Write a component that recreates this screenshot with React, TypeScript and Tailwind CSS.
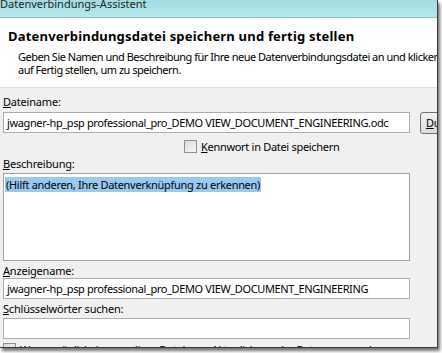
const font = "font-['Noto_Sans','Liberation_Sans',sans-serif]";

function Field({ value }: { value: string }) {
  return (
    <div className="h-[21px] w-[407px] shrink-0 border border-[#abadb3] bg-white pl-[3px] text-[11px] tracking-[-0.38px] leading-[19px] text-black whitespace-nowrap overflow-hidden">
      {value}
    </div>
  );
}

function Check({ label, underline }: { label: string; underline?: string }) {
  return (
    <div className="flex items-center gap-[4px] h-[13px]">
      <div className="h-[13px] w-[13px] shrink-0 border border-[#8f8f8f] bg-gradient-to-br from-[#dcdcdc] to-[#f6f6f6]" />
      <span className="text-[11px] tracking-[-0.3px] leading-[13px] whitespace-nowrap">
        {underline && <u>{underline}</u>}
        {label}
      </span>
    </div>
  );
}

function Label({ first, rest }: { first: string; rest: string }) {
  return (
    <div className="text-[11px] tracking-[-0.2px] leading-[14px] h-[14px] whitespace-nowrap">
      <u>{first}</u>
      {rest}
    </div>
  );
}

export default function App() {
  return (
    <div className={`${font} w-[442px] h-[353px] overflow-hidden bg-white text-black`}>
      <div className="w-[438px] h-[348px] overflow-hidden border-r border-b border-[#3a3a3a] bg-[#f0f0f0] shadow-[2px_3px_3px_rgba(0,0,0,0.55)] flex flex-col">
        {/* title bar */}
        <div className="h-[18px] shrink-0 bg-gradient-to-b from-[#a2dbe0] to-[#b7e8ec] border-b border-[#8fc4ca] text-[11px] leading-[14px] text-[#1e1e1e] overflow-hidden">
          <div className="-mt-[3px] whitespace-nowrap">Datenverbindungs-Assistent</div>
        </div>

        {/* header */}
        <div className="h-[70px] shrink-0 bg-white border-b border-[#dfdfdf] pl-[8px] pt-[10px]">
          <div className="text-[13px] tracking-[0.2px] font-bold leading-[16px] whitespace-nowrap">
            Datenverbindungsdatei speichern und fertig stellen
          </div>
          <div className="mt-[6px] pl-[10px] text-[11px] tracking-[-0.5px] leading-[13px] whitespace-nowrap">
            <div>Geben Sie Namen und Beschreibung für Ihre neue Datenverbindungsdatei an und klicken Sie</div>
            <div>auf Fertig stellen, um zu speichern.</div>
          </div>
        </div>

        {/* body */}
        <div className="pl-[3px] pt-[7px] flex flex-col">
          <Label first="D" rest="ateiname:" />
          <div className="mt-[3px] flex items-start gap-[10px]">
            <Field value="jwagner-hp_psp professional_pro_DEMO VIEW_DOCUMENT_ENGINEERING.odc" />
            <div className="h-[22px] w-[70px] shrink-0 rounded-[3px] border border-[#707070] bg-gradient-to-b from-[#f2f2f2] to-[#dcdcdc] pl-[5px] text-[11px] tracking-[-0.3px] leading-[20px] whitespace-nowrap">
              <u>D</u>urchsuchen...
            </div>
          </div>
          <div className="mt-[6px] pl-[181px]">
            <Check underline="K" label="ennwort in Datei speichern" />
          </div>
          <div className="mt-[4px]">
            <Label first="B" rest="eschreibung:" />
          </div>
          <div className="mt-[2px] h-[88px] w-[407px] shrink-0 border border-[#a0a0a0] bg-white pl-[1px] pt-[2px] leading-[14px]">
            <span className="bg-[#99c9ef] text-[11px] tracking-[-0.3px] leading-[14px] whitespace-nowrap px-[1px]">
              (Hilft anderen, Ihre Datenverknüpfung zu erkennen)
            </span>
          </div>
          <div className="mt-[3px]">
            <Label first="A" rest="nzeigename:" />
          </div>
          <div>
            <Field value="jwagner-hp_psp professional_pro_DEMO VIEW_DOCUMENT_ENGINEERING" />
          </div>
          <div className="mt-[3px]">
            <Label first="S" rest="chlüsselwörter suchen:" />
          </div>
          <div className="mt-[2px]">
            <Field value="" />
          </div>
          <div className="mt-[4px]">
            <Check label="Wenn möglich, immer diese Datei zum Aktualisieren der Daten verwenden" />
          </div>
        </div>
      </div>
    </div>
  );
}
